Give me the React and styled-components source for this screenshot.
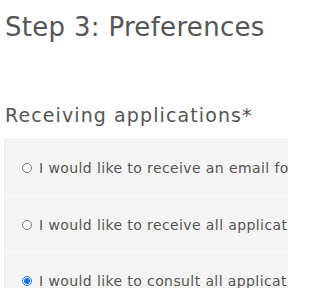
import React from 'react';
import styled, { createGlobalStyle } from 'styled-components';

const Global = createGlobalStyle`
  html, body {
    margin: 0;
    padding: 0;
    background: #fff;
  }
  body {
    font-family: "DejaVu Sans", sans-serif;
    color: #555;
    overflow: hidden;
  }
`;

const Page = styled.div`
  width: 288px;
  height: 288px;
  padding: 0 0 0 4px;
  box-sizing: border-box;
  overflow: hidden;
`;

const Title = styled.h2`
  margin: 0;
  padding: 10px 0 0 1px;
  font-size: 26px;
  font-weight: 400;
  letter-spacing: 0.3px;
  line-height: 34px;
  color: #555;
  white-space: nowrap;
`;

const Label = styled.h3`
  margin: 59px 0 0 1px;
  font-size: 19px;
  font-weight: 400;
  letter-spacing: 1.1px;
  line-height: 24px;
  color: #555;
  white-space: nowrap;
`;

const Panel = styled.div`
  margin-top: 12px;
  width: 360px;
  background: #f4f4f4;
  border: 1px solid #ececec;
  border-radius: 3px;
`;

const Option = styled.label`
  display: flex;
  align-items: center;
  gap: 7px;
  height: 56px;
  padding-left: 17px;
  box-sizing: border-box;
  font-size: 14px;
  letter-spacing: 0.4px;
  color: #555;
  white-space: nowrap;
  & + & {
    border-top: 1px solid #fafafa;
  }
`;

const Radio = styled.input`
  margin: 0;
  width: 10px;
  height: 10px;
  accent-color: #1a73e8;
`;

const options = [
  'I would like to receive an email for each application',
  'I would like to receive all applications in one email',
  'I would like to consult all applications online',
];

export default function App() {
  return (
    <Page>
      <Global />
      <Title>Step 3: Preferences</Title>
      <Label>Receiving applications*</Label>
      <Panel>
        {options.map((text, i) => (
          <Option key={i}>
            <Radio type="radio" name="receive" defaultChecked={i === 2} />
            {text}
          </Option>
        ))}
      </Panel>
    </Page>
  );
}
